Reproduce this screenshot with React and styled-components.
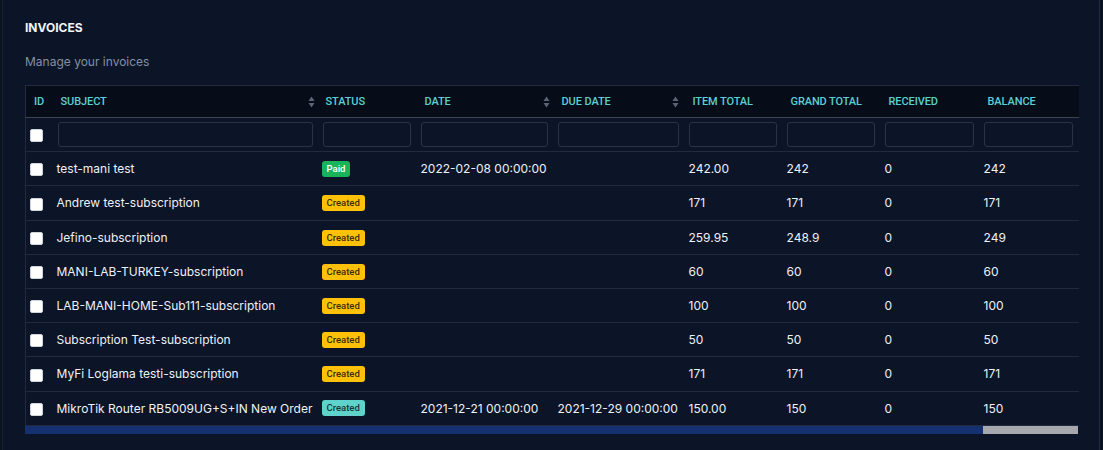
import React from "react";
import styled, { createGlobalStyle } from "styled-components";

const Global = createGlobalStyle`
  html, body { margin: 0; padding: 0; background: #0a111f; }
  body { font-family: "Inter", "Noto Sans", sans-serif; }
`;

const Card = styled.div`
  margin-left: 2px;
  width: 1098px;
  height: 450px;
  box-sizing: border-box;
  background: #0c1428;
  border-left: 1px solid #18213a;
  border-right: 1px solid #1d2a4c;
  padding: 20px 22px 0 22px;
`;

const Title = styled.h2`
  margin: 0;
  font-family: "Inter", sans-serif;
  font-size: 12px;
  font-weight: 700;
  color: #f3f5f9;
  line-height: 16px;
`;

const Subtitle = styled.p`
  margin: 18px 0 0;
  font-size: 12px;
  color: #8490a3;
  line-height: 16px;
`;

const TableWrap = styled.div`
  margin-top: 15px;
  width: 1053px;
`;

const Table = styled.table`
  width: 1053px;
  table-layout: fixed;
  border-collapse: collapse;
  border-top: 1px solid #222b3d;
  border-left: 1px solid #222b3d;
`;

const HeadRow = styled.tr`
  background: #070c19;
  border-bottom: 1px solid #3b4252;
`;

const Th = styled.th`
  position: relative;
  height: 31px;
  padding: 0 0 0 ${(p) => p.$pl || 7}px;
  text-align: left;
  font-family: "Roboto", sans-serif;
  font-size: 11px;
  font-weight: 500;
  letter-spacing: -0.1px;
  color: #5ccfd2;
  white-space: nowrap;
`;

const SortIcon = styled.svg`
  position: absolute;
  right: ${(p) => p.$r || 5}px;
  top: 50%;
  transform: translateY(-50%);
`;

const FilterRow = styled.tr`
  border-bottom: 1px solid #222b3d;
`;

const FilterCell = styled.td`
  height: 33px;
  padding: 0 6px 0 4px;
`;

const FilterInput = styled.input`
  display: block;
  width: 100%;
  height: 25px;
  box-sizing: border-box;
  background: transparent;
  border: 1px solid #2a3345;
  border-radius: 3px;
  outline: none;
`;

const Row = styled.tr`
  border-bottom: 1px solid #222b3d;
`;

const Td = styled.td`
  height: 33.2px;
  padding: 0 0 0 ${(p) => p.$pl ?? 3}px;
  font-size: 12px;
  color: #eef1f6;
  white-space: nowrap;
  overflow: visible;
`;

const Check = styled.span`
  display: inline-block;
  width: 11px;
  height: 11px;
  background: #fff;
  border-radius: 2px;
  border: 1px solid #cfd3da;
  vertical-align: middle;
`;

const badgeColors = {
  paid: { bg: "#17b45b", fg: "#ffffff" },
  created: { bg: "#ffc107", fg: "#3a2e05" },
  info: { bg: "#5fd3cb", fg: "#16363a" },
};

const Badge = styled.span`
  display: inline-block;
  padding: 0 5px;
  height: 16px;
  line-height: 16px;
  border-radius: 3px;
  font-family: "Roboto", sans-serif;
  font-size: 9.5px;
  font-weight: 500;
  background: ${(p) => badgeColors[p.$kind].bg};
  color: ${(p) => badgeColors[p.$kind].fg};
  vertical-align: middle;
`;

const ScrollTrack = styled.div`
  display: flex;
  height: 8px;
  background: #a6a8ae;
`;

const ScrollThumb = styled.div`
  height: 100%;
  background: #15306f;
`;

const cols = [28, 265, 98, 137, 131, 98, 98, 99, 99];

const headers = [
  { label: "ID", pl: 8 },
  { label: "SUBJECT", sort: true, r: 4 },
  { label: "STATUS" },
  { label: "DATE", pl: 8, sort: true, r: 4 },
  { label: "DUE DATE", pl: 8, sort: true, r: 6 },
  { label: "ITEM TOTAL", pl: 8 },
  { label: "GRAND TOTAL", pl: 8 },
  { label: "RECEIVED", pl: 8 },
  { label: "BALANCE", pl: 8 },
];

const rows = [
  ["test-mani test", "paid", "Paid", "2022-02-08 00:00:00", "", "242.00", "242", "0", "242"],
  ["Andrew test-subscription", "created", "Created", "", "", "171", "171", "0", "171"],
  ["Jefino-subscription", "created", "Created", "", "", "259.95", "248.9", "0", "249"],
  ["MANI-LAB-TURKEY-subscription", "created", "Created", "", "", "60", "60", "0", "60"],
  ["LAB-MANI-HOME-Sub111-subscription", "created", "Created", "", "", "100", "100", "0", "100"],
  ["Subscription Test-subscription", "created", "Created", "", "", "50", "50", "0", "50"],
  ["MyFi Loglama testi-subscription", "created", "Created", "", "", "171", "171", "0", "171"],
  ["MikroTik Router RB5009UG+S+IN New Order", "info", "Created", "2021-12-21 00:00:00", "2021-12-29 00:00:00", "150.00", "150", "0", "150"],
];

function Sort({ r }) {
  return (
    <SortIcon $r={r} width="7" height="12" viewBox="0 0 7 12">
      <path d="M3.5 0.5 L6.5 5 H0.5 Z" fill="#5b6475" />
      <path d="M3.5 11.5 L6.5 7 H0.5 Z" fill="#5b6475" />
    </SortIcon>
  );
}

export default function App() {
  return (
    <>
      <Global />
      <Card>
        <Title>INVOICES</Title>
        <Subtitle>Manage your invoices</Subtitle>
        <TableWrap>
          <Table>
            <colgroup>
              {cols.map((w, i) => (
                <col key={i} style={{ width: w }} />
              ))}
            </colgroup>
            <thead>
              <HeadRow>
                {headers.map((h) => (
                  <Th key={h.label} $pl={h.pl}>
                    {h.label}
                    {h.sort && <Sort r={h.r} />}
                  </Th>
                ))}
              </HeadRow>
              <FilterRow>
                <Td $pl={4}>
                  <Check />
                </Td>
                {cols.slice(1).map((_, i) => (
                  <FilterCell key={i}>
                    <FilterInput />
                  </FilterCell>
                ))}
              </FilterRow>
            </thead>
            <tbody>
              {rows.map((r, i) => (
                <Row key={i}>
                  <Td $pl={4}>
                    <Check />
                  </Td>
                  <Td>{r[0]}</Td>
                  <Td>
                    <Badge $kind={r[1]}>{r[2]}</Badge>
                  </Td>
                  <Td $pl={4}>{r[3]}</Td>
                  <Td $pl={4}>{r[4]}</Td>
                  <Td $pl={4}>{r[5]}</Td>
                  <Td $pl={4}>{r[6]}</Td>
                  <Td $pl={4}>{r[7]}</Td>
                  <Td $pl={4}>{r[8]}</Td>
                </Row>
              ))}
            </tbody>
          </Table>
          <ScrollTrack>
            <ScrollThumb style={{ width: "91%" }} />
          </ScrollTrack>
        </TableWrap>
      </Card>
    </>
  );
}
